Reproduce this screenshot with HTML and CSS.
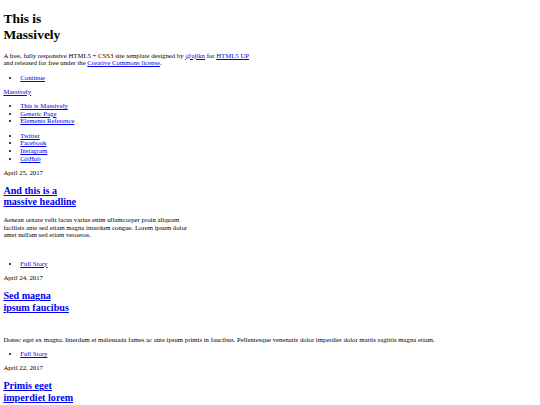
FILE: index.html
```
<!DOCTYPE html>
<html>
<head>
<meta charset="utf-8">
<title>Massively by HTML5 UP</title>
<link rel="stylesheet" href="styles.css">
</head>
<body class="page">
<div id="wrapper" class="wrapper">
  <div id="intro" class="intro">
    <h1 class="intro-title">This is<br>Massively</h1>
    <p class="text">A free, fully responsive HTML5 + CSS3 site template designed by <a href="#">@ajlkn</a> for <a href="#">HTML5 UP</a><br>
    and released for free under the <a href="#">Creative Commons license</a>.</p>
    <ul class="actions">
      <li><a href="#header">Continue</a></li>
    </ul>
  </div>
  <header id="header" class="site-header">
    <a href="#" class="logo">Massively</a>
  </header>
  <nav id="nav" class="nav">
    <ul class="links">
      <li><a href="#">This is Massively</a></li>
      <li><a href="#">Generic Page</a></li>
      <li><a href="#">Elements Reference</a></li>
    </ul>
    <ul class="icons">
      <li><a href="#"><span class="label">Twitter</span></a></li>
      <li><a href="#"><span class="label">Facebook</span></a></li>
      <li><a href="#"><span class="label">Instagram</span></a></li>
      <li><a href="#"><span class="label">GitHub</span></a></li>
    </ul>
  </nav>
  <div id="main" class="main">
    <article class="post featured">
      <header class="major">
        <span class="date">April 25, 2017</span>
        <h2 class="post-title"><a href="#">And this is a<br>
        massive headline</a></h2>
        <p class="text">Aenean ornare velit lacus varius enim ullamcorper proin aliquam<br>
        facilisis ante sed etiam magna interdum congue. Lorem ipsum dolor<br>
        amet nullam sed etiam veroeros.</p>
      </header>
      <a href="#" class="image main-image"><span class="img-slot"></span></a>
      <ul class="actions special">
        <li><a href="#">Full Story</a></li>
      </ul>
    </article>
    <section class="posts">
      <article class="post">
        <header>
          <span class="date">April 24, 2017</span>
          <h2 class="post-title"><a href="#">Sed magna<br>
          ipsum faucibus</a></h2>
        </header>
        <a href="#" class="image fit"><span class="img-slot"></span></a>
        <p class="text">Donec eget ex magna. Interdum et malesuada fames ac ante ipsum primis in faucibus. Pellentesque venenatis dolor imperdiet dolor mattis sagittis magna etiam.</p>
        <ul class="actions special">
          <li><a href="#">Full Story</a></li>
        </ul>
      </article>
      <article class="post">
        <header>
          <span class="date">April 22, 2017</span>
          <h2 class="post-title"><a href="#">Primis eget<br>
          imperdiet lorem</a></h2>
        </header>
        <a href="#" class="image fit"><span class="img-slot"></span></a>
        <p class="text">Donec eget ex magna. Interdum et malesuada fames ac ante ipsum primis in faucibus. Pellentesque venenatis dolor imperdiet dolor mattis sagittis magna etiam.</p>
        <ul class="actions special">
          <li><a href="#">Full Story</a></li>
        </ul>
      </article>
    </section>
  </div>
</div>
</body>
</html>
```

FILE: styles.css
```
html {
  zoom: 0.421875;
}
body.page {
  margin: 8px;
  font-family: "Liberation Serif", "Times New Roman", serif;
  font-size: 16px;
  line-height: 18px;
  color: #000;
  background: #fff;
}
.intro-title {
  font-size: 32px;
  line-height: 37px;
  margin: 19px 0 21.44px;
}
.post-title {
  font-size: 24px;
  line-height: 27px;
  margin: 19.92px 0;
}
.img-slot {
  display: inline-block;
  width: 0;
  height: 0;
}
a {
  color: #0000ee;
}
```
